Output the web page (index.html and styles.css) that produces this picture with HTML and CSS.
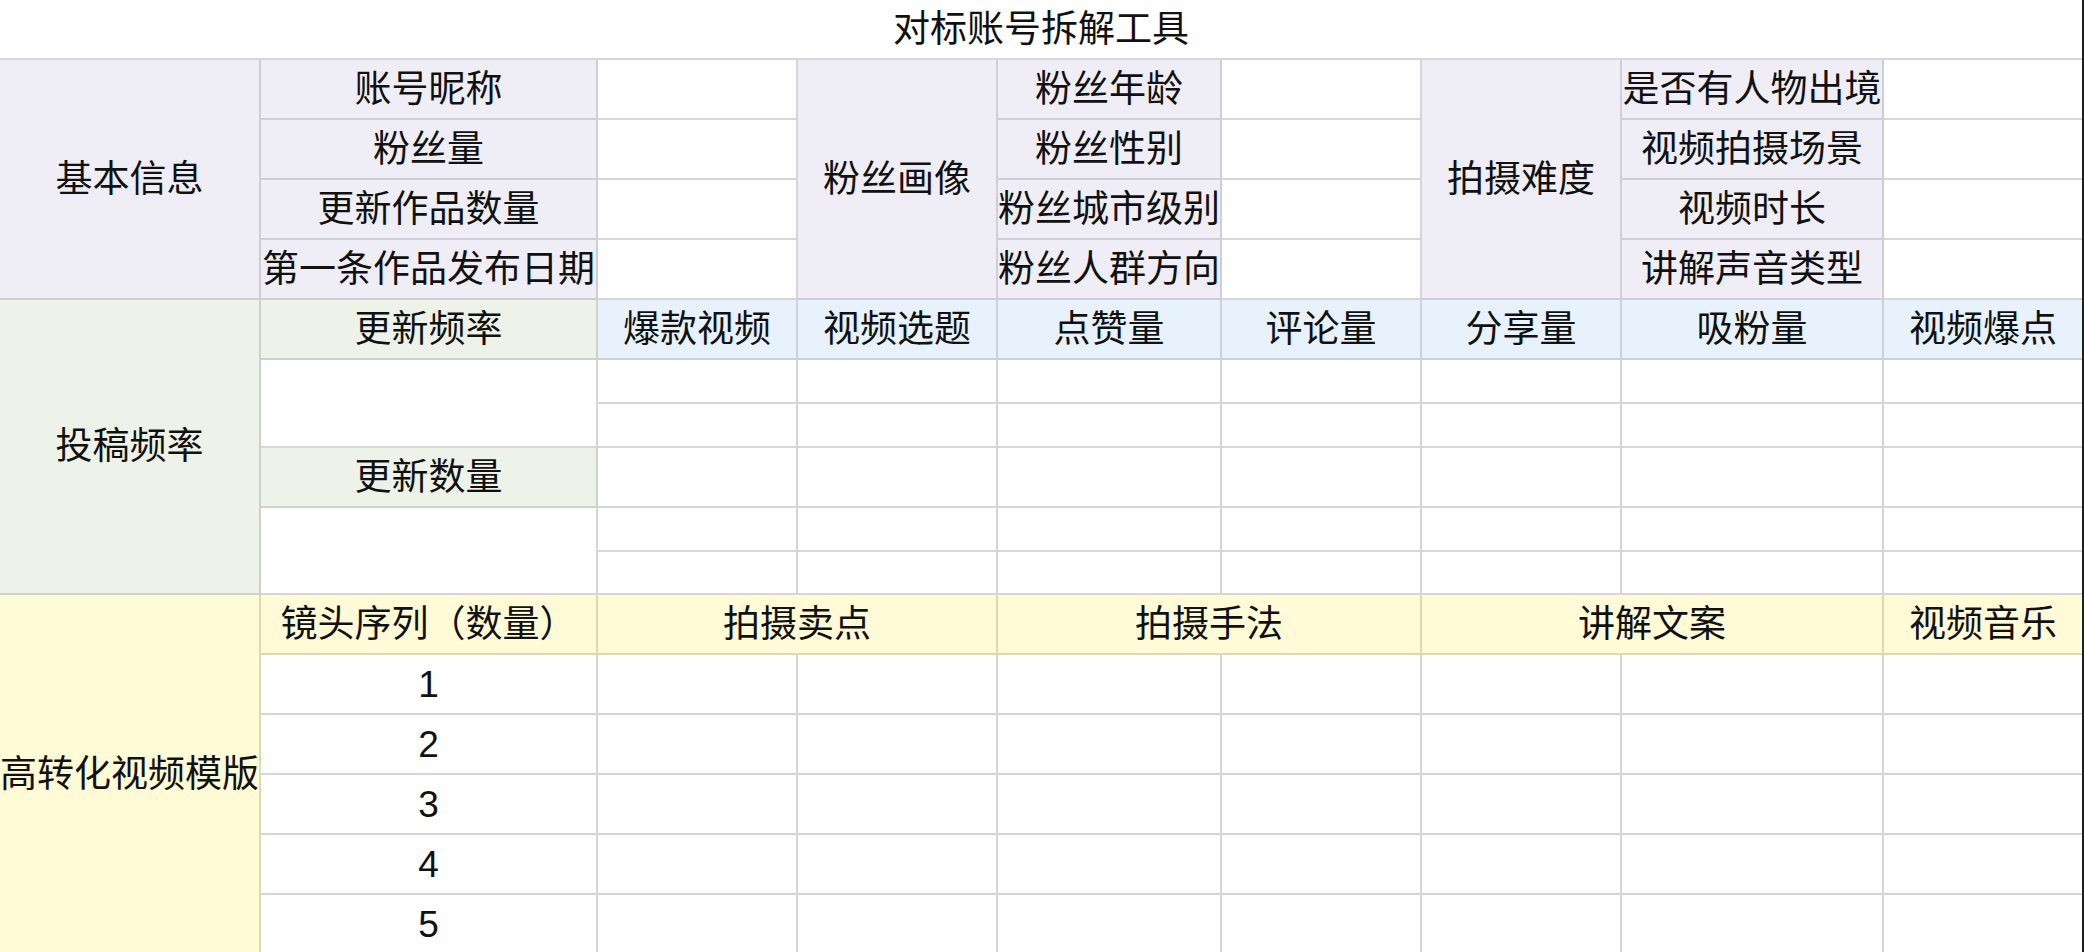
FILE: index.html
```html
<!DOCTYPE html>
<html lang="zh-CN">
<head>
<meta charset="utf-8">
<title>对标账号拆解工具</title>
<link rel="stylesheet" href="styles.css">
</head>
<body>
<div class="page">
  <div class="sheet">
    <div class="cell title span9">对标账号拆解工具</div>

    <div class="cell lav rows4">基本信息</div>
    <div class="cell lav">账号昵称</div>
    <div class="cell"></div>
    <div class="cell lav rows4">粉丝画像</div>
    <div class="cell lav">粉丝年龄</div>
    <div class="cell"></div>
    <div class="cell lav rows4">拍摄难度</div>
    <div class="cell lav">是否有人物出境</div>
    <div class="cell end"></div>

    <div class="cell lav">粉丝量</div>
    <div class="cell"></div>
    <div class="cell lav">粉丝性别</div>
    <div class="cell"></div>
    <div class="cell lav">视频拍摄场景</div>
    <div class="cell end"></div>

    <div class="cell lav">更新作品数量</div>
    <div class="cell"></div>
    <div class="cell lav">粉丝城市级别</div>
    <div class="cell"></div>
    <div class="cell lav">视频时长</div>
    <div class="cell end"></div>

    <div class="cell lav">第一条作品发布日期</div>
    <div class="cell"></div>
    <div class="cell lav">粉丝人群方向</div>
    <div class="cell"></div>
    <div class="cell lav">讲解声音类型</div>
    <div class="cell end"></div>

    <div class="cell green rows6">投稿频率</div>
    <div class="cell green">更新频率</div>
    <div class="cell blue">爆款视频</div>
    <div class="cell blue">视频选题</div>
    <div class="cell blue">点赞量</div>
    <div class="cell blue">评论量</div>
    <div class="cell blue">分享量</div>
    <div class="cell blue">吸粉量</div>
    <div class="cell blue end">视频爆点</div>

    <div class="cell rows2"></div>
    <div class="cell"></div><div class="cell"></div><div class="cell"></div><div class="cell"></div><div class="cell"></div><div class="cell"></div><div class="cell end"></div>

    <div class="cell"></div><div class="cell"></div><div class="cell"></div><div class="cell"></div><div class="cell"></div><div class="cell"></div><div class="cell end"></div>

    <div class="cell green">更新数量</div>
    <div class="cell"></div><div class="cell"></div><div class="cell"></div><div class="cell"></div><div class="cell"></div><div class="cell"></div><div class="cell end"></div>

    <div class="cell rows2"></div>
    <div class="cell"></div><div class="cell"></div><div class="cell"></div><div class="cell"></div><div class="cell"></div><div class="cell"></div><div class="cell end"></div>

    <div class="cell"></div><div class="cell"></div><div class="cell"></div><div class="cell"></div><div class="cell"></div><div class="cell"></div><div class="cell end"></div>

    <div class="cell yellow rows6">高转化视频模版</div>
    <div class="cell yellow">镜头序列（数量）</div>
    <div class="cell yellow span2">拍摄卖点</div>
    <div class="cell yellow span2">拍摄手法</div>
    <div class="cell yellow span2">讲解文案</div>
    <div class="cell yellow end">视频音乐</div>

    <div class="cell">1</div>
    <div class="cell"></div><div class="cell"></div><div class="cell"></div><div class="cell"></div><div class="cell"></div><div class="cell"></div><div class="cell end"></div>

    <div class="cell">2</div>
    <div class="cell"></div><div class="cell"></div><div class="cell"></div><div class="cell"></div><div class="cell"></div><div class="cell"></div><div class="cell end"></div>

    <div class="cell">3</div>
    <div class="cell"></div><div class="cell"></div><div class="cell"></div><div class="cell"></div><div class="cell"></div><div class="cell"></div><div class="cell end"></div>

    <div class="cell">4</div>
    <div class="cell"></div><div class="cell"></div><div class="cell"></div><div class="cell"></div><div class="cell"></div><div class="cell"></div><div class="cell end"></div>

    <div class="cell">5</div>
    <div class="cell"></div><div class="cell"></div><div class="cell"></div><div class="cell"></div><div class="cell"></div><div class="cell"></div><div class="cell end"></div>
  </div>
  <div class="edge"></div>
</div>
</body>
</html>
```

FILE: styles.css
```css
html, body {
  margin: 0;
  padding: 0;
  background: #ffffff;
  overflow: hidden;
}

.page {
  display: flex;
  width: 2084px;
  height: 952px;
  overflow: hidden;
}

.sheet {
  width: 2082px;
  flex: none;
  display: grid;
  grid-template-columns: 261px 337px 200px 200px 224px 200px 200px 262px 198px;
  grid-template-rows: 60px 60px 60px 60px 60px 60px 44px 44px 60px 44px 43px 60px 60px 60px 60px 60px 60px;
  font-family: "Liberation Sans", "Noto Sans CJK SC", sans-serif;
  font-size: 37px;
  color: #111111;
}

.edge {
  width: 2px;
  flex: none;
  background: #1f1f1f;
}

.cell {
  box-sizing: border-box;
  display: flex;
  align-items: center;
  justify-content: center;
  white-space: nowrap;
  overflow: hidden;
  background: #ffffff;
  border-right: 2px solid #d6d6d6;
  border-bottom: 2px solid #d6d6d6;
  line-height: 1;
}

.cell.end {
  border-right: 0;
}

.title {
  border-right: 0;
}

.span9 { grid-column: span 9; }
.span2 { grid-column: span 2; }
.rows2 { grid-row: span 2; }
.rows4 { grid-row: span 4; }
.rows6 { grid-row: span 6; }

.lav {
  background: #efeef6;
  border-color: #cfced6;
}

.green {
  background: #eef3e9;
  border-color: #cdd3c8;
}

.blue {
  background: #e8f2fc;
  border-color: #c8d3de;
}

.yellow {
  background: #fffbd7;
  border-color: #dcd9b5;
}
```
